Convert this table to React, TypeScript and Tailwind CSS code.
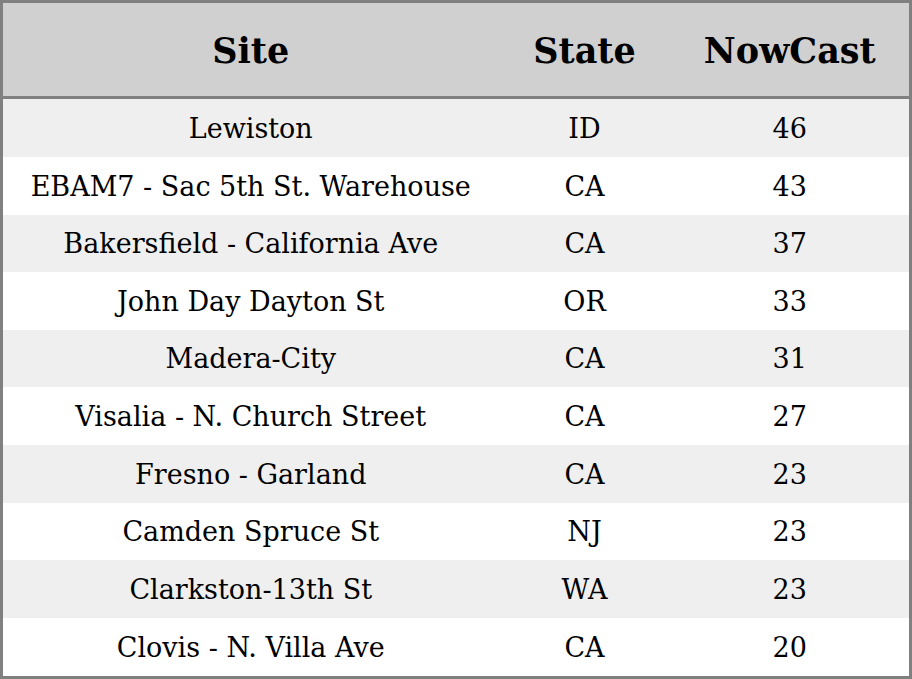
const rows: [string, string, number][] = [
  ["Lewiston", "ID", 46],
  ["EBAM7 - Sac 5th St. Warehouse", "CA", 43],
  ["Bakersfield - California Ave", "CA", 37],
  ["John Day Dayton St", "OR", 33],
  ["Madera-City", "CA", 31],
  ["Visalia - N. Church Street", "CA", 27],
  ["Fresno - Garland", "CA", 23],
  ["Camden Spruce St", "NJ", 23],
  ["Clarkston-13th St", "WA", 23],
  ["Clovis - N. Villa Ave", "CA", 20],
];

export default function App() {
  return (
    <div className="w-[912px] h-[679px] bg-white font-['DejaVu_Serif',serif] text-black">
      <table className="w-full h-full border-[3px] border-[#808080] border-collapse table-fixed">
        <colgroup>
          <col className="w-[497px]" />
          <col className="w-[172px]" />
          <col />
        </colgroup>
        <thead>
          <tr className="h-[96px] bg-[#d0d0d0] border-b-[3px] border-[#808080]">
            <th className="text-[35px] font-bold text-center pt-[4px]">Site</th>
            <th className="text-[35px] font-bold text-center pt-[4px]">State</th>
            <th className="text-[35px] font-bold text-center pt-[4px]">NowCast</th>
          </tr>
        </thead>
        <tbody>
          {rows.map(([site, state, val], i) => (
            <tr key={site} className={i % 2 === 0 ? "bg-[#efefef]" : "bg-white"}>
              <td className="text-[27px] text-center pt-[2px]">{site}</td>
              <td className="text-[27px] text-center pt-[2px]">{state}</td>
              <td className="text-[27px] text-center pt-[2px]">{val}</td>
            </tr>
          ))}
        </tbody>
      </table>
    </div>
  );
}
